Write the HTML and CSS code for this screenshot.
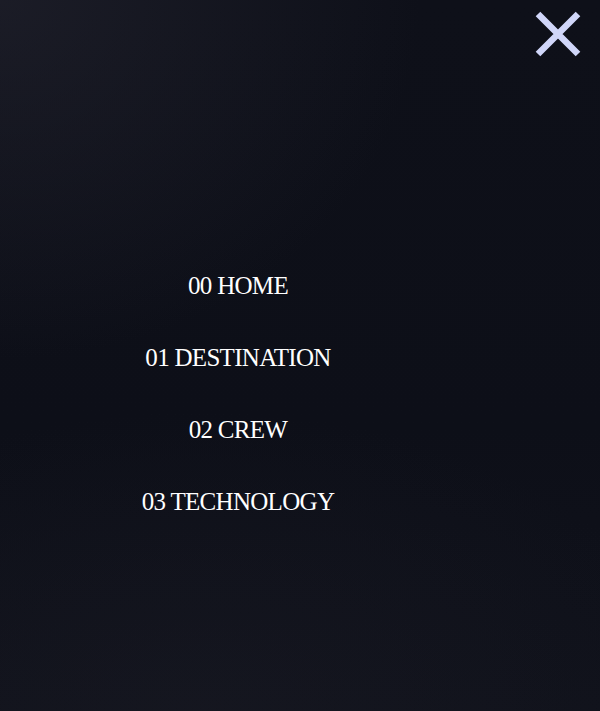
FILE: index.html
```html
<!DOCTYPE html>
<html lang="en">
<head>
<meta charset="utf-8">
<title>Menu</title>
<link rel="stylesheet" href="styles.css">
</head>
<body>
<div class="overlay">
  <header class="topbar">
    <button class="close" aria-label="Close menu">
      <svg width="48" height="48" viewBox="0 0 48 48" aria-hidden="true">
        <path d="M4 5 L44 45 M44 5 L4 45" stroke="#d0d6f9" stroke-width="6.5" fill="none"/>
      </svg>
    </button>
  </header>
  <nav class="menu">
    <a class="item" href="#">00 HOME</a>
    <a class="item" href="#">01 DESTINATION</a>
    <a class="item" href="#">02 CREW</a>
    <a class="item" href="#">03 TECHNOLOGY</a>
  </nav>
</div>
</body>
</html>
```
FILE: styles.css
```css
html, body {
  margin: 0;
  height: 100%;
}
body {
  background: #0d0f18;
  font-family: "Liberation Serif", "DejaVu Serif", serif;
}
.overlay {
  height: 711px;
  background:
    radial-gradient(ellipse 420px 360px at 0 0, rgba(40,40,52,0.5), rgba(40,40,52,0) 100%),
    radial-gradient(ellipse 500px 300px at 200px 711px, rgba(30,30,40,0.35), rgba(30,30,40,0) 100%),
    linear-gradient(180deg, #0e1019 0%, #0d0f18 60%, #10121b 100%);
  display: flex;
  flex-direction: column;
}
.topbar {
  display: flex;
  justify-content: flex-end;
  padding: 9px 18px 0 0;
}
.close {
  background: none;
  border: 0;
  padding: 0;
  width: 48px;
  height: 48px;
  cursor: pointer;
}
.close svg { display: block; }
.menu {
  display: flex;
  flex-direction: column;
  align-items: center;
  width: 476px;
  gap: 40px;
  padding-top: 213px;
}
.item {
  color: #ffffff;
  text-decoration: none;
  font-size: 25px;
  line-height: 32px;
  letter-spacing: -0.7px;
}
```
